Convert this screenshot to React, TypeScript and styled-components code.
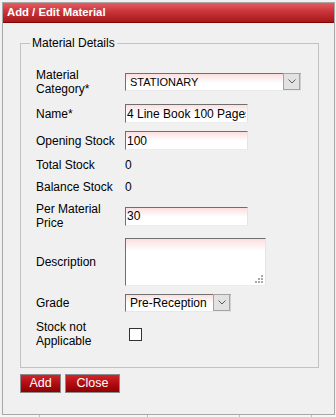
import React from "react";
import styled, { createGlobalStyle } from "styled-components";

const GlobalStyle = createGlobalStyle`
  html, body {
    margin: 0;
    padding: 0;
    background: #f0f0f0;
  }
  body {
    font-family: "Liberation Sans", Arial, sans-serif;
    font-size: 12px;
    color: #000;
  }
`;

const Dialog = styled.div`
  box-sizing: border-box;
  margin: 2px 0 0 2px;
  width: 333px;
  height: 413px;
  border: 1px solid #a7a7a7;
  background: #f0f0f0;
`;

const TitleBar = styled.div`
  box-sizing: border-box;
  height: 20px;
  padding-left: 4px;
  line-height: 19px;
  font-size: 11.3px;
  font-weight: bold;
  color: #fff;
  background: linear-gradient(to bottom, #e45c61 0%, #c8353a 45%, #a8171a 100%);
  border-bottom: 1px solid #850000;
`;

const Body = styled.div`
  padding: 13px 15px 0 17px;
`;

const Fieldset = styled.fieldset`
  margin: 0;
  padding: 0;
  border: 1px solid #c2c2c2;
  min-width: 0;
`;

const Legend = styled.legend`
  margin-left: 9px;
  padding: 0 2px;
  line-height: 14px;
  font-size: 12px;
`;

const FormGrid = styled.div`
  display: grid;
  grid-template-columns: 89px 1fr;
  row-gap: 8px;
  align-items: center;
  padding: 18px 0 19px 15px;
`;

const Label = styled.div`
  line-height: 14px;
`;

const Value = styled.div`
  line-height: 14px;
`;

const TextInput = styled.input`
  box-sizing: border-box;
  display: block;
  width: ${(p: { $w?: number }) => p.$w ?? 123}px;
  height: 19px;
  margin: 0;
  padding: 0 1px;
  font-family: "Liberation Sans", Arial, sans-serif;
  font-size: 12px;
  color: #000;
  border: 1px solid;
  border-color: #6f6f6f #e4e4e4 #ececec #6f6f6f;
  background: linear-gradient(to bottom, #fbdfdf 0px, #ffffff 9px);
  outline: none;
`;

const SelectBox = styled.div<{ $w: number; $fs: number }>`
  box-sizing: border-box;
  display: flex;
  width: ${(p) => p.$w}px;
  height: 18px;
  border: 1px solid;
  border-color: #707070 #d0d0d0 #e8e8e8 #707070;
  background: linear-gradient(to bottom, #fbdfdf 0px, #ffffff 9px);
  font-size: ${(p) => p.$fs}px;
`;

const SelectText = styled.div`
  flex: 1;
  padding-left: 4px;
  line-height: 16px;
  white-space: nowrap;
  overflow: hidden;
`;

const ArrowBox = styled.div`
  box-sizing: border-box;
  width: 17px;
  height: 17px;
  margin-top: -1px;
  border: 1px solid #a3a3a3;
  background: #e2e2e2;
  display: flex;
  align-items: center;
  justify-content: center;
`;

const AreaWrap = styled.div`
  position: relative;
  width: 141px;
  height: 48px;
`;

const TextArea = styled.textarea`
  box-sizing: border-box;
  display: block;
  width: 141px;
  height: 48px;
  margin: 0;
  padding: 1px;
  resize: none;
  font-family: "Liberation Sans", Arial, sans-serif;
  font-size: 12px;
  border: 1px solid;
  border-color: #6f6f6f #e4e4e4 #ececec #6f6f6f;
  background: linear-gradient(to bottom, #fbdfdf 0px, #ffffff 12px);
  outline: none;
`;

const Grip = styled.svg`
  position: absolute;
  right: 3px;
  bottom: 3px;
`;

const CheckBox = styled.input`
  appearance: none;
  display: block;
  box-sizing: border-box;
  width: 13px;
  height: 13px;
  margin: 1px 0 0 4px;
  border: 1px solid #333;
  background: #fff;
`;

const ButtonRow = styled.div`
  display: flex;
  gap: 4px;
  margin-top: 6px;
`;

const RedButton = styled.button<{ $w: number }>`
  box-sizing: border-box;
  width: ${(p) => p.$w}px;
  height: 19px;
  padding: 0;
  font-family: "Liberation Sans", Arial, sans-serif;
  font-size: 12.5px;
  line-height: 17px;
  color: #fff;
  border: 1px solid #8c8c8c;
  background: linear-gradient(to bottom, #d0252b 0%, #b10d12 50%, #8e0000 100%);
`;

const BehindStrip = styled.div`
  display: flex;
  height: 2px;
  padding-left: 39px;
  background: #f6f6f6;
`;

const StripCell = styled.div<{ $w: number }>`
  width: ${(p) => p.$w}px;
  border-left: 1px solid #bdbdbd;
  box-sizing: border-box;
`;

function Chevron() {
  return (
    <svg width="8" height="5" viewBox="0 0 8 5">
      <polyline points="0.5,0.5 4,4 7.5,0.5" fill="none" stroke="#5a5a5a" strokeWidth="1" />
    </svg>
  );
}

function Select({ value, width, fontSize }: { value: string; width: number; fontSize: number }) {
  return (
    <SelectBox $w={width} $fs={fontSize}>
      <SelectText>{value}</SelectText>
      <ArrowBox>
        <Chevron />
      </ArrowBox>
    </SelectBox>
  );
}

export default function App() {
  return (
    <>
      <GlobalStyle />
      <Dialog>
        <TitleBar>Add / Edit Material</TitleBar>
        <Body>
          <Fieldset>
            <Legend>Material Details</Legend>
            <FormGrid>
              <Label>Material Category*</Label>
              <Select value="STATIONARY" width={176} fontSize={11} />

              <Label>Name*</Label>
              <TextInput defaultValue="4 Line Book 100 Pages" />

              <Label>Opening Stock</Label>
              <TextInput defaultValue="100" />

              <Label>Total Stock</Label>
              <Value>0</Value>

              <Label>Balance Stock</Label>
              <Value>0</Value>

              <Label>Per Material Price</Label>
              <TextInput defaultValue="30" />

              <Label>Description</Label>
              <AreaWrap>
                <TextArea />
                <Grip width="8" height="8" viewBox="0 0 8 8">
                  <rect x="6" y="0" width="2" height="2" fill="#a8a8a8" />
                  <rect x="3" y="3" width="2" height="2" fill="#a8a8a8" />
                  <rect x="6" y="3" width="2" height="2" fill="#a8a8a8" />
                  <rect x="0" y="6" width="2" height="2" fill="#a8a8a8" />
                  <rect x="3" y="6" width="2" height="2" fill="#a8a8a8" />
                  <rect x="6" y="6" width="2" height="2" fill="#a8a8a8" />
                </Grip>
              </AreaWrap>

              <Label>Grade</Label>
              <Select value="Pre-Reception" width={106} fontSize={12} />

              <Label>Stock not Applicable</Label>
              <CheckBox type="checkbox" />
            </FormGrid>
          </Fieldset>
          <ButtonRow>
            <RedButton $w={41}>Add</RedButton>
            <RedButton $w={55}>Close</RedButton>
          </ButtonRow>
        </Body>
      </Dialog>
      <BehindStrip>
        <StripCell $w={108} />
        <StripCell $w={92} />
        <StripCell $w={72} />
        <StripCell $w={25} />
      </BehindStrip>
    </>
  );
}
